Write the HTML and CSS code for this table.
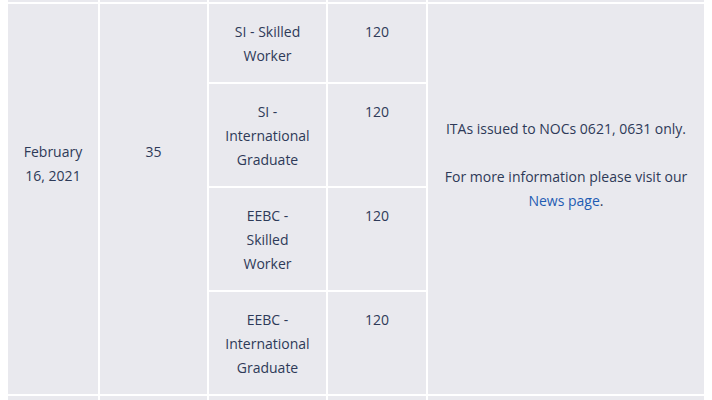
FILE: index.html
```html
<!DOCTYPE html>
<html>
<head>
<meta charset="utf-8">
<link rel="stylesheet" href="styles.css">
</head>
<body>
<table class="draws">
  <colgroup>
    <col class="c-date"><col class="c-num"><col class="c-stream"><col class="c-score"><col class="c-notes">
  </colgroup>
  <tr class="prev"><td></td><td></td><td></td><td></td><td></td></tr>
  <tr>
    <td rowspan="4" class="mid">February 16, 2021</td>
    <td rowspan="4" class="mid">35</td>
    <td class="stream">SI - Skilled Worker</td>
    <td>120</td>
    <td rowspan="4" class="notes">ITAs issued to NOCs 0621, 0631 only.<br><br>For more information please visit our <a href="#">News page</a>.</td>
  </tr>
  <tr><td class="stream">SI - International Graduate</td><td>120</td></tr>
  <tr><td class="stream">EEBC - Skilled Worker</td><td>120</td></tr>
  <tr><td class="stream">EEBC - International Graduate</td><td>120</td></tr>
  <tr><td>&nbsp;</td><td></td><td></td><td></td><td></td></tr>
</table>
</body>
</html>
```

FILE: styles.css
```css
html, body {
  margin: 0;
  padding: 0;
  background: #ffffff;
}
body {
  padding: 0 6px;
  font-family: "Open Sans", "Noto Sans", sans-serif;
  font-size: 14px;
  line-height: 24px;
  color: #2e3a58;
}
.draws {
  width: 700px;
  margin-top: -2px;
  table-layout: fixed;
  border-collapse: separate;
  border-spacing: 2px;
}
.c-date { width: 90px; }
.c-num { width: 107px; }
.c-stream { width: 117px; }
.c-score { width: 98px; }
.c-notes { width: 276px; }
.draws td {
  background: #e9e9ee;
  padding: 16px 10px 14px;
  text-align: center;
  vertical-align: top;
}
.draws td.stream {
  padding-left: 15px;
  padding-right: 15px;
}
.draws .prev td {
  height: 2px;
  padding: 0;
  line-height: 0;
}
.draws td.mid {
  padding-top: 136px;
}
.draws td.notes {
  padding: 113px 8px 14px;
}
.draws a {
  color: #1f5cb3;
  text-decoration: none;
}
```
